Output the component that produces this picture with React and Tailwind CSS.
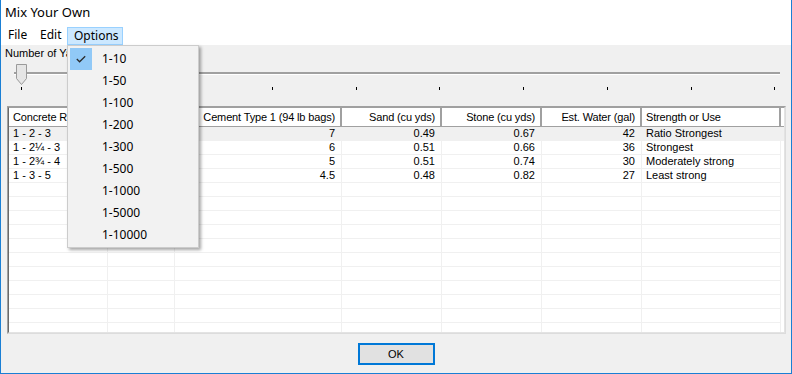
import React from "react";

const rows = [
  { ratio: "1 - 2 - 3", yards: "1", cement: "7", sand: "0.49", stone: "0.67", water: "42", use: "Ratio Strongest" },
  { ratio: "1 - 2¼ - 3", yards: "1", cement: "6", sand: "0.51", stone: "0.66", water: "36", use: "Strongest" },
  { ratio: "1 - 2¾ - 4", yards: "1", cement: "5", sand: "0.51", stone: "0.74", water: "30", use: "Moderately strong" },
  { ratio: "1 - 3 - 5", yards: "1", cement: "4.5", sand: "0.48", stone: "0.82", water: "27", use: "Least strong" },
];

const ranges = ["1-10", "1-50", "1-100", "1-200", "1-300", "1-500", "1-1000", "1-5000", "1-10000"];

const ticks = [21, 105, 189, 272, 356, 439, 523, 607, 691, 774];

const gridCols = "grid grid-cols-[99px_67px_167px_100px_100px_100px_139px_1fr]";

// Trackbar drawn as svg (coords are page x - 1, page y - 61)
const Slider = () => (
  <svg width="790" height="40" className="block">
    <rect x="13" y="11" width="766" height="2" fill="#a0a0a0" />
    <rect x="13" y="13" width="766" height="1" fill="#ffffff" />
    <polygon points="15.5,3.5 25.5,3.5 25.5,17.5 20.5,23.5 15.5,17.5" fill="#e5e5e5" stroke="#9a9a9a" />
    {ticks.map((t) => (
      <rect key={t} x={t - 1} y="26" width="1" height="3" fill="#000" />
    ))}
  </svg>
);

const HeaderCell = ({ children, right }) => (
  <div
    className={`h-[18px] border-r-2 border-[#a0a0a0] pl-[4px] pr-[5px] leading-[18px] whitespace-nowrap overflow-x-clip tracking-[-0.15px] ${
      right ? "text-right" : "text-left"
    }`}
  >
    {children}
  </div>
);

const Cell = ({ children, right, selected }) => (
  <div
    className={`h-[14px] border-r border-b border-[#f0f0f0] pl-[4px] pr-[6px] leading-[13px] whitespace-nowrap overflow-x-clip ${
      right ? "text-right" : "text-left"
    } ${selected ? "bg-[#f0f0f0]" : "bg-white"}`}
  >
    {children}
  </div>
);

export default function App() {
  const empty = Array.from({ length: 11 });

  return (
    <div className="relative w-[792px] h-[374px] overflow-hidden bg-[#f0f0f0] border-x border-b border-[#1a7fd4] font-['Noto_Sans',sans-serif] text-[12px] text-black">
      {/* Title bar */}
      <div className="h-[26px] bg-white pl-[4px] flex items-center text-[13px]">Mix Your Own</div>

      {/* Menu bar */}
      <div className="h-[19px] bg-white flex items-stretch">
        <div className="w-[32px] pl-[7px] leading-[18px]">File</div>
        <div className="w-[34px] pl-[7px] leading-[18px]">Edit</div>
        <div className="w-[56px] pl-[6px] leading-[16px] bg-[#cce8ff] border border-[#99d1ff] mt-[1px]">Options</div>
      </div>

      {/* Content */}
      <div className="flex flex-col font-['Liberation_Sans',sans-serif] text-[11px]">
        <div className="h-[16px] pl-[4px] leading-[16px]">Number of Yards</div>
        <Slider />

        {/* List view */}
        <div className="ml-[6px] mt-[5px] w-[779px] h-[228px] border border-t-[#a0a0a0] border-l-[#a0a0a0] border-r-[#dcdcdc] border-b-[#dcdcdc]">
          <div className="h-full border border-t-[#a0a0a0] border-l-[#696969] border-r-[#e3e3e3] border-b-[#e3e3e3] bg-white overflow-hidden">
            <div className={`${gridCols} border-b border-[#a0a0a0] bg-white`}>
              <HeaderCell>Concrete Ratio</HeaderCell>
              <HeaderCell>Yards</HeaderCell>
              <HeaderCell right>Cement Type 1 (94 lb bags)</HeaderCell>
              <HeaderCell right>Sand (cu yds)</HeaderCell>
              <HeaderCell right>Stone (cu yds)</HeaderCell>
              <HeaderCell right>Est. Water (gal)</HeaderCell>
              <HeaderCell>Strength or Use</HeaderCell>
              <div className="h-[18px]" />
            </div>
            {rows.map((r, i) => (
              <div key={r.ratio} className={gridCols}>
                <Cell selected={i === 0}>{r.ratio}</Cell>
                <Cell selected={i === 0} right>{r.yards}</Cell>
                <Cell selected={i === 0} right>{r.cement}</Cell>
                <Cell selected={i === 0} right>{r.sand}</Cell>
                <Cell selected={i === 0} right>{r.stone}</Cell>
                <Cell selected={i === 0} right>{r.water}</Cell>
                <Cell selected={i === 0}>{r.use}</Cell>
                <div className={`h-[14px] ${i === 0 ? "bg-[#f0f0f0]" : ""}`} />
              </div>
            ))}
            {empty.map((_, i) => (
              <div key={i} className={gridCols}>
                <Cell />
                <Cell />
                <Cell />
                <Cell />
                <Cell />
                <Cell />
                <Cell />
                <div className="h-[14px]" />
              </div>
            ))}
          </div>
        </div>

        {/* OK button */}
        <div className="flex justify-center mt-[9px]">
          <button className="w-[77px] h-[22px] bg-[#e1e1e1] border-2 border-[#0078d7] leading-[18px] text-center">OK</button>
        </div>
      </div>

      {/* Options dropdown */}
      <div className="absolute left-[66px] top-[45px] w-[132px] h-[203px] bg-[#f2f2f2] border border-[#cccccc] shadow-[2px_2px_3px_rgba(0,0,0,0.35)] pt-[2px]">
        {ranges.map((r, i) => (
          <div key={r} className="h-[22px] flex items-center">
            <div className={`ml-[2px] w-[22px] h-[22px] flex items-center justify-center ${i === 0 ? "bg-[#91c9f7]" : ""}`}>
              {i === 0 && (
                <svg width="10" height="8" viewBox="0 0 10 8">
                  <path d="M0.8 4 L3.6 6.8 L9.2 1.2" fill="none" stroke="#2b2b2b" strokeWidth="1.3" />
                </svg>
              )}
            </div>
            <span className="ml-[10px]">{r}</span>
          </div>
        ))}
      </div>
    </div>
  );
}
